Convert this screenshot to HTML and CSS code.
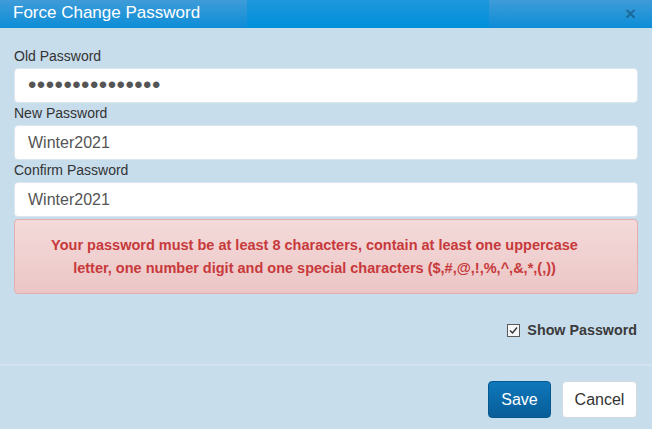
FILE: index.html
```html
<!DOCTYPE html>
<html>
<head>
<meta charset="utf-8">
<link rel="stylesheet" href="styles.css">
</head>
<body>
<div class="modal">
  <div class="modal-header">
    <span class="modal-title">Force Change Password</span>
    <span class="close">&times;</span>
  </div>
  <div class="modal-body">
    <label class="field-label">Old Password</label>
    <div class="input dots">&#8226;&#8226;&#8226;&#8226;&#8226;&#8226;&#8226;&#8226;&#8226;&#8226;&#8226;&#8226;&#8226;&#8226;&#8226;</div>
    <label class="field-label">New Password</label>
    <div class="input">Winter2021</div>
    <label class="field-label">Confirm Password</label>
    <div class="input">Winter2021</div>
    <div class="alert">Your password must be at least 8 characters, contain at least one uppercase<br>letter, one number digit and one special characters ($,#,@,!,%,^,&amp;,*,(,))</div>
    <div class="show-row">
      <svg class="checkbox" width="13" height="13" viewBox="0 0 13 13"><rect x="0.5" y="0.5" width="12" height="12" fill="#f4f6f8" stroke="#5a5a5a"/><path d="M3 6.5 L5.5 9 L10 3.5" fill="none" stroke="#333" stroke-width="1.4"/></svg>
      <span class="show-label">Show Password</span>
    </div>
  </div>
  <div class="modal-footer">
    <button class="btn btn-primary">Save</button>
    <button class="btn btn-default">Cancel</button>
  </div>
</div>
</body>
</html>
```
FILE: styles.css
```css
html, body {
  margin: 0;
  padding: 0;
}
body {
  width: 652px;
  height: 429px;
  overflow: hidden;
  background: #c8ddec;
  font-family: "Liberation Sans", Arial, sans-serif;
}
.modal {
  display: flex;
  flex-direction: column;
  height: 429px;
}
.modal-header {
  height: 28px;
  display: flex;
  align-items: center;
  justify-content: space-between;
  padding: 0 14px 0 13px;
  background-image:
    linear-gradient(#1e97dc, #0090db),
    linear-gradient(#3f9cd8, #0c8dd7);
  background-size: 242px 28px, 100% 28px;
  background-position: 247px 0, 0 0;
  background-repeat: no-repeat;
}
.modal-title {
  color: #fff;
  font-size: 17px;
  line-height: 28px;
  margin-top: -3px;
}
.close {
  color: rgba(0, 0, 0, 0.3);
  font-weight: bold;
  font-size: 19px;
  line-height: 28px;
  margin-top: -1px;
  margin-right: 2px;
}
.modal-body {
  padding: 18px 14px 0 14px;
  height: 336px;
  box-sizing: border-box;
  display: flex;
  flex-direction: column;
}
.field-label {
  display: block;
  height: 22px;
  line-height: 20px;
  font-size: 14px;
  color: #333;
}
.input {
  height: 35px;
  box-sizing: border-box;
  background: #fff;
  border: 1px solid #dde6ee;
  border-radius: 4px;
  padding: 0 13px;
  line-height: 33px;
  font-size: 16px;
  color: #555;
  overflow: hidden;
}
.input.dots {
  font-size: 24px;
  letter-spacing: 0.45px;
  line-height: 32px;
  color: #555;
}
.alert {
  margin-top: 2px;
  height: 75px;
  box-sizing: border-box;
  border: 1px solid #e3aeae;
  border-radius: 4px;
  background: linear-gradient(#f4dada, #ecc6c6);
  color: #c7393b;
  font-weight: bold;
  font-size: 14.5px;
  line-height: 23px;
  text-align: center;
  padding: 14px 23px 0 0;
}
.show-row {
  margin-top: 26px;
  display: flex;
  align-items: center;
  justify-content: flex-end;
  gap: 7px;
  height: 20px;
  padding-right: 1px;
}
.checkbox {
  display: block;
}
.show-label {
  font-weight: bold;
  font-size: 14.3px;
  color: #3a3a3a;
}
.modal-footer {
  border-top: 2px solid #d4e3ef;
  display: flex;
  justify-content: flex-end;
  gap: 11px;
  padding: 15px 15px 0 0;
}
.btn {
  height: 37px;
  font-family: "Liberation Sans", Arial, sans-serif;
  font-size: 16px;
  border-radius: 4px;
  padding: 0;
  margin: 0;
}
.btn-primary {
  width: 63px;
  color: #fff;
  background: linear-gradient(#0f78bb, #075d98);
  border: 1px solid #065890;
}
.btn-default {
  width: 75px;
  color: #333;
  background: #fff;
  border: 1px solid #d2d9e0;
}
```
